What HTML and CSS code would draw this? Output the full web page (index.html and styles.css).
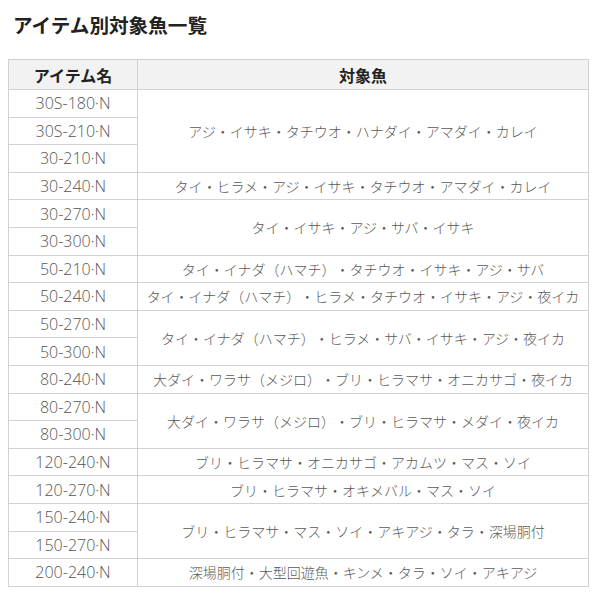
FILE: index.html
```html
<!DOCTYPE html>
<html lang="ja">
<head>
<meta charset="utf-8">
<link rel="stylesheet" href="styles.css">
</head>
<body>
<div class="page">
  <h1 class="title">アイテム別対象魚一覧</h1>
  <table class="fish-table">
    <thead>
      <tr class="head-row">
        <th class="col-item">アイテム名</th>
        <th class="col-fish">対象魚</th>
      </tr>
    </thead>
    <tbody>
      <tr><td class="item">30S-180·N</td><td class="fish" rowspan="3">アジ・イサキ・タチウオ・ハナダイ・アマダイ・カレイ</td></tr>
      <tr><td class="item">30S-210·N</td></tr>
      <tr><td class="item">30-210·N</td></tr>
      <tr><td class="item">30-240·N</td><td class="fish">タイ・ヒラメ・アジ・イサキ・タチウオ・アマダイ・カレイ</td></tr>
      <tr><td class="item">30-270·N</td><td class="fish" rowspan="2">タイ・イサキ・アジ・サバ・イサキ</td></tr>
      <tr><td class="item">30-300·N</td></tr>
      <tr><td class="item">50-210·N</td><td class="fish">タイ・イナダ（ハマチ）・タチウオ・イサキ・アジ・サバ</td></tr>
      <tr><td class="item">50-240·N</td><td class="fish">タイ・イナダ（ハマチ）・ヒラメ・タチウオ・イサキ・アジ・夜イカ</td></tr>
      <tr><td class="item">50-270·N</td><td class="fish" rowspan="2">タイ・イナダ（ハマチ）・ヒラメ・サバ・イサキ・アジ・夜イカ</td></tr>
      <tr><td class="item">50-300·N</td></tr>
      <tr><td class="item">80-240·N</td><td class="fish">大ダイ・ワラサ（メジロ）・ブリ・ヒラマサ・オニカサゴ・夜イカ</td></tr>
      <tr><td class="item">80-270·N</td><td class="fish" rowspan="2">大ダイ・ワラサ（メジロ）・ブリ・ヒラマサ・メダイ・夜イカ</td></tr>
      <tr><td class="item">80-300·N</td></tr>
      <tr><td class="item">120-240·N</td><td class="fish">ブリ・ヒラマサ・オニカサゴ・アカムツ・マス・ソイ</td></tr>
      <tr><td class="item">120-270·N</td><td class="fish">ブリ・ヒラマサ・オキメバル・マス・ソイ</td></tr>
      <tr><td class="item">150-240·N</td><td class="fish" rowspan="2">ブリ・ヒラマサ・マス・ソイ・アキアジ・タラ・深場胴付</td></tr>
      <tr><td class="item">150-270·N</td></tr>
      <tr><td class="item">200-240·N</td><td class="fish">深場胴付・大型回遊魚・キンメ・タラ・ソイ・アキアジ</td></tr>
    </tbody>
  </table>
</div>
</body>
</html>
```

FILE: styles.css
```css
html, body {
  margin: 0;
  padding: 0;
  background: #ffffff;
}
.page {
  padding: 8px;
  font-family: "Noto Sans CJK JP", "Noto Sans", sans-serif;
  text-spacing-trim: space-all;
}
.title {
  margin: 0 0 17px 5px;
  font-size: 19.6px;
  line-height: 34px;
  font-weight: 700;
  color: #222222;
}
.fish-table {
  border-collapse: collapse;
  width: 581px;
  table-layout: fixed;
  border: 1px solid #d2d2d2;
}
.fish-table th,
.fish-table td {
  border: 1px solid #d2d2d2;
  padding: 0;
  text-align: center;
  vertical-align: middle;
  white-space: nowrap;
}
.head-row {
  height: 30px;
  background: #f2f2f2;
}
.fish-table th {
  font-size: 16px;
  font-weight: 700;
  color: #222222;
}
.col-item {
  width: 128px;
}
.fish-table tbody tr {
  height: 27.6px;
}
.item {
  font-family: "Open Sans", "Noto Sans CJK JP", sans-serif;
  font-size: 16px;
  font-weight: 300;
  color: #555555;
}
.fish {
  font-size: 14px;
  font-weight: 300;
  color: #5a5a5a;
}
```
